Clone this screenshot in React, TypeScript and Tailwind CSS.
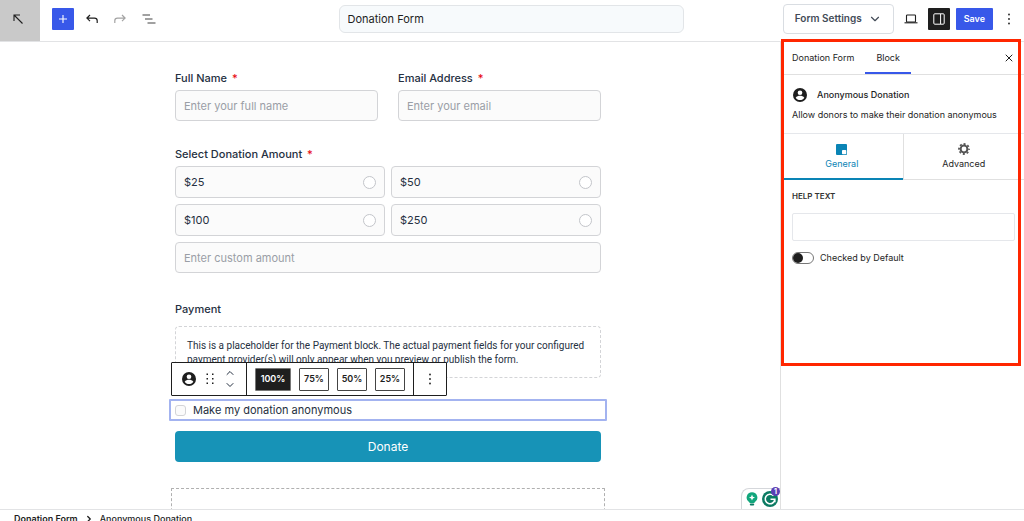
import { useState } from "react";
import type { ReactNode } from "react";
import { ChevronDown, ChevronRight, ChevronUp, X } from "lucide-react";

const amounts = ["$25", "$50", "$100", "$250"];
const widths = ["100%", "75%", "50%", "25%"];

function UserIcon({ className }: { className: string }) {
  return (
    <svg viewBox="0 0 24 24" className={className} aria-hidden="true">
      <circle cx="12" cy="12" r="12" fill="#1e1e1e" />
      <circle cx="12" cy="8.2" r="4" fill="#fff" />
      <path d="M4.6 16.6c1.4-2.3 4.8-3.2 7.4-3.2s6 .9 7.4 3.2c-1.6 2.4-4.3 4-7.4 4s-5.8-1.6-7.4-4z" fill="#fff" />
    </svg>
  );
}

function DotsIcon() {
  return (
    <svg viewBox="0 0 4 12" className="h-3 w-1" fill="#1e1e1e" aria-hidden="true">
      <circle cx="2" cy="1.5" r=".9" />
      <circle cx="2" cy="6" r=".9" />
      <circle cx="2" cy="10.5" r=".9" />
    </svg>
  );
}

function Label({ htmlFor, children }: { htmlFor: string; children: ReactNode }) {
  return (
    <label htmlFor={htmlFor} className="mb-1 block leading-4 font-medium">
      {children} <span className="ml-0.5 text-red-600">*</span>
    </label>
  );
}

function Header() {
  return (
    <header className="grid shrink-0 grid-cols-[1fr_minmax(0,345px)_1fr] items-center border-b border-[#e2e3e5] pr-0.5">
      <div className="flex items-center">
        <button aria-label="Back" className="flex h-[41px] w-10 items-center justify-center bg-[#c9c9c9] pr-1 pb-1">
          <svg viewBox="0 0 10 10" className="size-2.5" fill="none" stroke="#1e1e1e" strokeWidth="1.1" aria-hidden="true">
            <path d="M1 7V1h6M1 1l8.5 8.5" />
          </svg>
        </button>
        <div className="-mt-1 ml-3 flex items-center">
          <button aria-label="Add block" className="flex size-[22px] items-center justify-center rounded-[1px] bg-[#3858e9]">
            <svg viewBox="0 0 10 10" className="size-2.5" stroke="#fff" strokeWidth="1.1" aria-hidden="true">
              <path d="M5 1v8M1 5h8" />
            </svg>
          </button>
          <div className="ml-3 flex items-center gap-4">
            <button aria-label="Undo">
              <svg viewBox="0 0 12 10" className="h-2.5 w-3" fill="none" stroke="#1e1e1e" strokeWidth="1.2" aria-hidden="true">
                <path d="M4 1L.9 4.1 4 7.200M1 4.100h7.500c1.800 0 2.700 1 2.700 2.600V9" />
              </svg>
            </button>
            <button aria-label="Redo">
              <svg viewBox="0 0 12 10" className="h-2.5 w-3" fill="none" stroke="#a3a3a3" strokeWidth="1.2" aria-hidden="true">
                <path d="M8 1l3.100 3.100L8 7.200M11 4.100H3.500C1.700 4.100.8 5.100.8 6.700V9" />
              </svg>
            </button>
            <button aria-label="Document overview">
              <svg viewBox="0 0 14 10" className="h-2.5 w-3.5" stroke="#444" strokeWidth="1.2" aria-hidden="true">
                <path d="M.5 1h7.500M3 5h7.500M5.500 9h8" />
              </svg>
            </button>
          </div>
        </div>
      </div>
      <input
        aria-label="Form title"
        defaultValue="Donation Form"
        className="-mt-1 h-7 w-full rounded-md border border-[#e2e5e8] bg-[#f7fafc] px-2 text-[11px] text-[#1e1e1e]"
      />
      <div className="-mt-1 flex items-center justify-end pr-[11px]">
        <button className="flex h-[30px] items-center gap-1.5 rounded border border-[#d9dde2] px-[11px] text-[10px] font-semibold text-[#434b57]">
          Form Settings
          <ChevronDown className="size-3.5" />
        </button>
        <button aria-label="Preview" className="ml-2.5">
          <svg viewBox="0 0 14 10" className="h-2.5 w-3.5" fill="none" stroke="#1e1e1e" strokeWidth="1.1" aria-hidden="true">
            <rect x="2.500" y="1" width="9" height="7" rx=".8" />
            <path d="M.5 8.800h13" />
          </svg>
        </button>
        <button aria-label="Settings" className="ml-2.5 flex size-[22px] items-center justify-center rounded-[1px] bg-[#1e1e1e]">
          <svg viewBox="0 0 12 12" className="size-3" fill="none" stroke="#fff" aria-hidden="true">
            <rect x=".8" y=".8" width="10.400" height="10.400" rx="1" />
            <path d="M7.600 1v10" />
          </svg>
        </button>
        <button className="ml-1.5 h-[22px] rounded-[1px] bg-[#3858e9] px-2 text-[9px] font-semibold text-white">Save</button>
        <button aria-label="Options" className="ml-3.5">
          <DotsIcon />
        </button>
      </div>
    </header>
  );
}

function BlockToolbar() {
  return (
    <div className="absolute bottom-full left-0 mb-[5px] flex h-[34px] rounded-[1px] border border-[#1e1e1e] bg-white">
      <div className="flex items-center gap-2.5 border-r border-[#1e1e1e] px-2.5">
        <button aria-label="Anonymous Donation">
          <UserIcon className="size-3.5" />
        </button>
        <button aria-label="Drag">
          <svg viewBox="0 0 8 11" className="h-3 w-2" fill="#1e1e1e" aria-hidden="true">
            <path d="M.5 0H2v1.500H.5zM.5 4.500H2V6H.5zM.5 9H2v1.500H.5zM6 0h1.500v1.500H6zM6 4.500h1.500V6H6zM6 9h1.500v1.500H6z" />
          </svg>
        </button>
        <div className="flex flex-col">
          <button aria-label="Move up">
            <ChevronUp className="size-3" />
          </button>
          <button aria-label="Move down">
            <ChevronDown className="size-3" />
          </button>
        </div>
      </div>
      <div className="flex items-center gap-2 border-r border-[#1e1e1e] px-2">
        {widths.map((width, i) => (
          <button
            key={width}
            className={
              i === 0
                ? "h-[23px] w-9 rounded-[1px] border border-[#777] bg-[#1e1e1e] text-[9px] font-semibold text-white"
                : "h-[23px] w-[30px] rounded-[1px] border border-[#444] text-[9px] font-semibold text-[#1e1e1e]"
            }
          >
            {width}
          </button>
        ))}
      </div>
      <button aria-label="More options" className="px-3.5">
        <DotsIcon />
      </button>
    </div>
  );
}

function DonationForm() {
  const [amount, setAmount] = useState("");
  return (
    <form className="mx-auto w-full max-w-[430px] pt-7 pr-1 text-[11px] text-[#253041]">
      <div className="grid grid-cols-2 gap-5">
        <div>
          <Label htmlFor="name">Full Name</Label>
          <input id="name" placeholder="Enter your full name" className="h-[31px] w-full rounded border border-[#d3d4d7] bg-[#fbfbfb] px-2 placeholder:text-[#9a9ea6]" />
        </div>
        <div>
          <Label htmlFor="email">Email Address</Label>
          <input id="email" type="email" placeholder="Enter your email" className="h-[31px] w-full rounded border border-[#d3d4d7] bg-[#fbfbfb] px-2 placeholder:text-[#9a9ea6]" />
        </div>
      </div>
      <div className="mt-[25px]">
        <Label htmlFor="custom">Select Donation Amount</Label>
        <div className="grid grid-cols-2 gap-1.5">
          {amounts.map((value) => (
            <label key={value} className="flex h-8 items-center justify-between rounded border border-[#d3d4d7] bg-[#fbfbfb] px-2">
              {value}
              <input
                type="radio"
                name="amount"
                checked={amount === value}
                onChange={() => setAmount(value)}
                className="size-[13px] appearance-none rounded-full border border-[#c3c5ca] bg-white checked:border-4 checked:border-[#1793b7]"
              />
            </label>
          ))}
          <input id="custom" placeholder="Enter custom amount" className="col-span-2 h-[31px] w-full rounded border border-[#d3d4d7] bg-[#fbfbfb] px-2 placeholder:text-[#9a9ea6]" />
        </div>
      </div>
      <h2 className="mt-7 mb-[9px] leading-4 font-medium">Payment</h2>
      <p className="rounded border border-dashed border-[#d3d4d7] px-[11px] pt-3 pb-2.5 font-[Roboto,sans-serif] text-[10px] leading-[14px]">
        This is a placeholder for the Payment block. The actual payment fields for your configured payment provider(s)
        will only appear when you preview or publish the form.
      </p>
      <div className="relative -mx-1.5 mt-[21px] rounded-[1px] border-2 border-[#a3b3f0] px-1">
        <label className="flex h-[18px] items-center gap-[7px]">
          <input type="checkbox" className="size-[11px] appearance-none rounded-[3px] border border-[#d3d4d7] bg-[#fbfbfb] checked:bg-[#1793b7]" />
          Make my donation anonymous
        </label>
        <BlockToolbar />
      </div>
      <button type="button" className="mt-2.5 h-[31px] w-full rounded bg-[#1793b7] text-xs text-white">
        Donate
      </button>
      <div className="-mx-1 mt-[26px] h-16 rounded-[1px] border border-dashed border-[#b0b0b0]" />
    </form>
  );
}

function Sidebar() {
  return (
    <aside className="relative w-61 shrink-0 border-l border-[#e0e0e0] text-[9px] text-[#1e1e1e]">
      <div className="flex h-[33px] items-stretch border-b border-[#e0e0e0]">
        <button className="px-[11px]">Donation Form</button>
        <button className="border-b-2 border-[#3858e9] px-[11px] pt-0.5">Block</button>
        <button aria-label="Close settings" className="ml-auto pr-[9px]">
          <X className="size-3" strokeWidth={2} />
        </button>
      </div>
      <div className="border-b border-[#e5e7eb] px-[11px] pt-[13px] pb-[11px]">
        <div className="flex items-center gap-2.5">
          <UserIcon className="ml-px size-3.5" />
          <h2 className="font-medium">Anonymous Donation</h2>
        </div>
        <p className="mt-1.5 leading-[14px]">Allow donors to make their donation anonymous</p>
      </div>
      <div className="grid h-[46px] grid-cols-2">
        <button className="flex flex-col items-center justify-center border-b-2 border-[#0a84b5] pt-0.5 text-[#0a84b5]">
          <svg viewBox="0 0 11 11" className="mb-0.5 size-[11px]" aria-hidden="true">
            <path d="M1 0h9a1 1 0 0 1 1 1v9a1 1 0 0 1-1 1H1a1 1 0 0 1-1-1V1a1 1 0 0 1 1-1z" fill="#0a84b5" />
            <rect x="6" y="6" width="4.300" height="4.300" rx=".8" fill="#fff" />
          </svg>
          General
        </button>
        <button className="flex flex-col items-center justify-center border-b border-l border-[#e0e0e0] pt-px">
          <svg viewBox="0 0 12 12" className="mb-0.5 size-3" fill="none" aria-hidden="true">
            <circle cx="6" cy="6" r="3.400" stroke="#555" strokeWidth="2" />
            <circle cx="6" cy="6" r="5" stroke="#555" strokeWidth="1.800" strokeDasharray="2 1.927" strokeDashoffset="1" />
          </svg>
          Advanced
        </button>
      </div>
      <div className="pt-2.5 pr-[9px] pl-[11px]">
        <label htmlFor="help" className="block text-[8px] leading-3 font-semibold text-[#333]">HELP TEXT</label>
        <input id="help" className="mt-[11px] h-7 w-full rounded-[2px] border border-[#e5e7eb] px-2" />
        <label className="mt-2.5 flex items-center gap-1.5">
          <input
            type="checkbox"
            role="switch"
            className="h-3 w-[22px] appearance-none rounded-full border border-[#777] before:block before:size-2.5 before:rounded-full before:bg-[#1e1e1e] checked:before:translate-x-2.5"
          />
          Checked by Default
        </label>
      </div>
      {/* highlight around the block settings */}
      <div className="pointer-events-none absolute -top-[3px] right-[3px] left-0 z-10 h-[327px] border-3 border-[#ff2600]" />
    </aside>
  );
}

export default function App() {
  return (
    <div className="flex h-screen flex-col overflow-hidden bg-white font-[Inter,sans-serif] text-[#1e1e1e]">
      <Header />
      <div className="flex min-h-0 flex-1">
        <main className="relative min-w-0 flex-1">
          <div className="h-full overflow-hidden">
            <DonationForm />
          </div>
          <div className="absolute right-0 bottom-0 flex h-[21px] items-center gap-1 rounded-tl-lg border-t border-l border-[#d5d7db] bg-white pr-0.5 pl-1">
            <svg viewBox="0 0 12 14" className="h-3.5 w-3" aria-hidden="true">
              <path d="M6 .3a5.300 5.300 0 0 1 3 9.700l-.8 1H3.800L3 10A5.300 5.300 0 0 1 6 .3z" fill="#12a67c" />
              <rect x="3.800" y="11.600" width="4.400" height="2" rx="1" fill="#0b7a62" />
              <path d="M6 2.600l.9 2.100 2.100.9-2.100.9L6 8.600l-.9-2.100L3 5.600l2.100-.9z" fill="#fff" />
            </svg>
            <svg viewBox="0 0 16 16" className="size-4" fill="none" aria-hidden="true">
              <circle cx="8" cy="8" r="8" fill="#0b7a62" />
              <path d="M11.600 4.800A4.800 4.800 0 1 0 12.800 8.300H8.500M12.800 8.300v3" stroke="#fff" strokeWidth="1.600" />
            </svg>
            <span className="absolute -top-0.5 right-0 flex size-[9px] items-center justify-center rounded-full bg-[#5b3fb5] text-[7px] leading-none font-bold text-white">
              1
            </span>
          </div>
        </main>
        <Sidebar />
      </div>
      <footer className="h-3 shrink-0 overflow-hidden border-t border-[#e2e3e5] pt-0.5">
        <nav className="flex items-center gap-1.5 px-3.5 text-[9px] leading-[14px] font-medium">
          <a href="#form" className="font-semibold">Donation Form</a>
          <ChevronRight className="size-2.5" strokeWidth={3} />
          <span>Anonymous Donation</span>
        </nav>
      </footer>
    </div>
  );
}
